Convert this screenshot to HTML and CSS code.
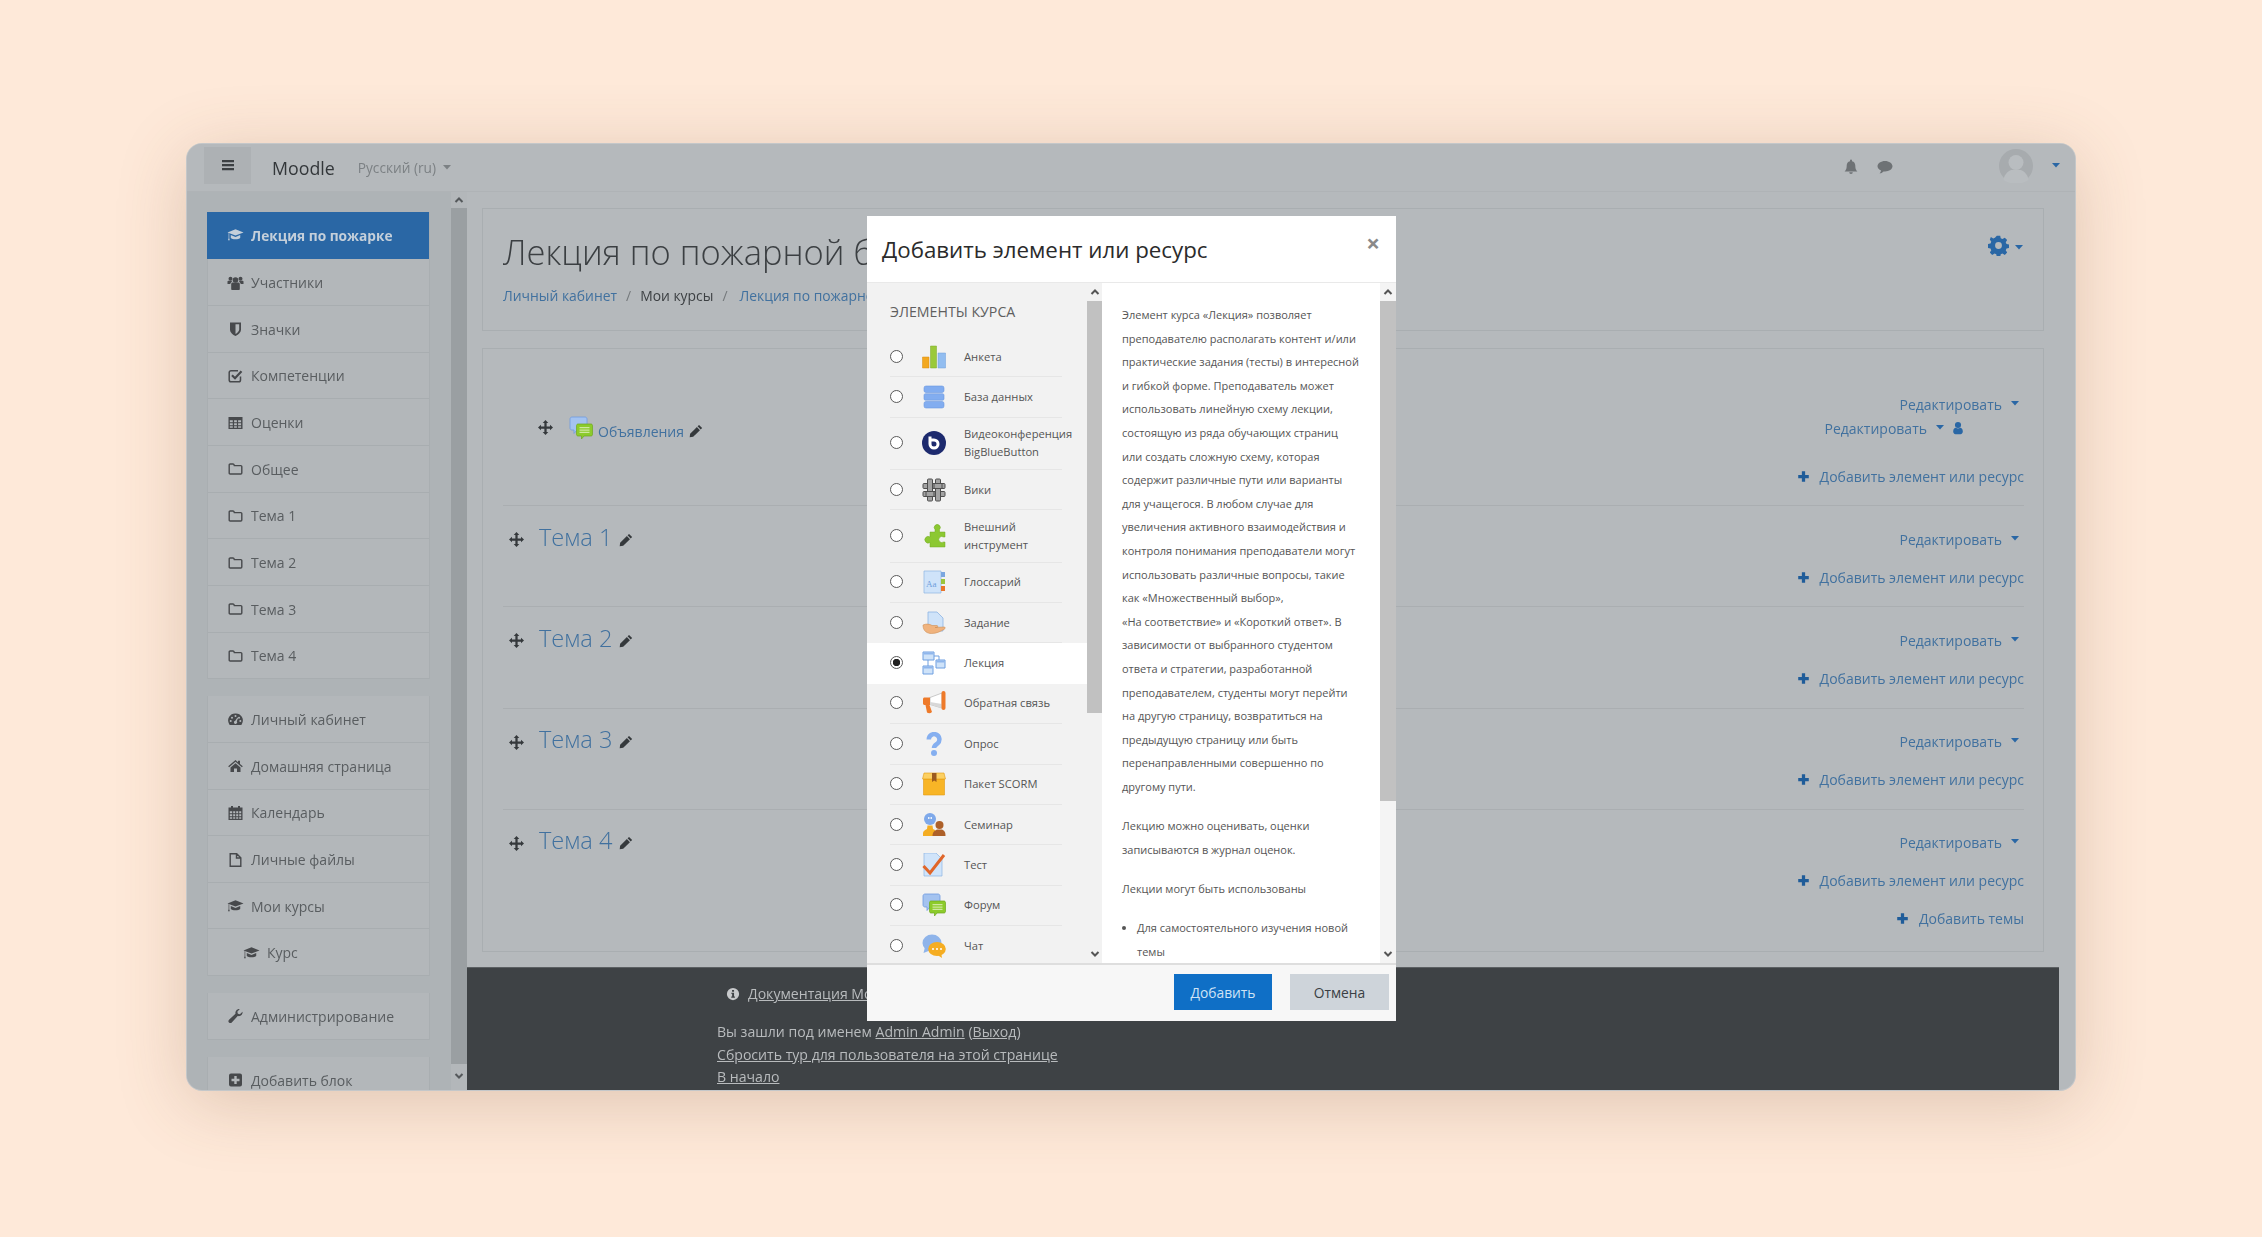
FILE: index.html
```html
<!DOCTYPE html>
<html lang="ru">
<head>
<meta charset="utf-8">
<title>Moodle</title>
<link rel="stylesheet" href="styles.css">
</head>
<body>
<svg class="defs" aria-hidden="true">
  <symbol id="i-bars" viewBox="0 0 16 16"><path d="M2 3h12v2.2H2zM2 7h12v2.2H2zM2 11h12v2.2H2z"/></symbol>
  <symbol id="i-cap" viewBox="0 0 18 16"><path d="M9 2 .5 5.3 9 8.6l8.500-3.300z"/><path d="M4 8v3.200c1.600 1.800 8.400 1.800 10 0V8L9 10z"/><path d="M1.700 6v5.500l-.7 2h2l-.6-2V6.500z"/></symbol>
  <symbol id="i-users" viewBox="0 0 16 16"><circle cx="8" cy="5" r="2.800"/><circle cx="3" cy="3.800" r="2"/><circle cx="13" cy="3.800" r="2"/><path d="M3.700 9c0-1 1-1.500 2-1.500h4.600c1 0 2 .5 2 1.500v5c0 .6-.5 1-1 1H4.700c-.5 0-1-.4-1-1z"/><path d="M0 6.500c0-.5.5-.8 1-.8h3l.5 1.300C3.500 7.300 3 8 2.800 9H0zM16 6.500c0-.5-.5-.8-1-.8h-3l-.5 1.300c1 .3 1.500 1 1.700 2H16z"/></symbol>
  <symbol id="i-shield" viewBox="0 0 16 16"><path fill-rule="evenodd" d="M2.500 1.500h11v7c0 3-3 5.500-5.500 6.500-2.500-1-5.500-3.500-5.500-6.500zM8 3.300v9.700c1.700-.9 3.700-2.700 3.700-4.500V3.300z"/></symbol>
  <symbol id="i-check" viewBox="0 0 16 16"><path fill="none" stroke="currentColor" stroke-width="1.500" d="M13 8.500V12a1.800 1.800 0 0 1-1.800 1.800H3.500A1.800 1.800 0 0 1 1.700 12V4.500a1.800 1.800 0 0 1 1.800-1.800h7"/><path fill="none" stroke="currentColor" stroke-width="2.200" d="m4.500 7.200 3 3 6.500-7"/></symbol>
  <symbol id="i-table" viewBox="0 0 16 16"><path fill-rule="evenodd" d="M1 2h14v12H1zM2.300 5.300v2h3v-2zm4.300 0v2h2.800v-2zm4 0v2h3v-2zM2.300 8.300v2h3v-2zm4.300 0v2h2.800v-2zm4 0v2h3v-2zm-8.300 3v1.500h3v-1.500zm4.300 0v1.500h2.800v-1.500zm4 0v1.500h3v-1.500z"/></symbol>
  <symbol id="i-folder" viewBox="0 0 16 16"><path fill="none" stroke="currentColor" stroke-width="1.400" d="M1.700 4c0-.6.400-1 1-1h2.800c.6 0 1 .4 1.100 1l.2.600h6.500c.6 0 1 .4 1 1V12c0 .6-.4 1-1 1H2.700c-.6 0-1-.4-1-1z"/></symbol>
  <symbol id="i-gauge" viewBox="0 0 16 16"><path fill-rule="evenodd" d="M8 1.500a7 7 0 0 1 6.400 10.500l-.6 1H2.200l-.6-1A7 7 0 0 1 8 1.500zM8 3a1 1 0 1 0 0 2 1 1 0 0 0 0-2zM4.500 4.700a1 1 0 1 0 0 2 1 1 0 0 0 0-2zm7 0a1 1 0 1 0 0 2 1 1 0 0 0 0-2zM3.200 8a1 1 0 1 0 0 2 1 1 0 0 0 0-2zm9.600 0a1 1 0 1 0 0 2 1 1 0 0 0 0-2zM9.900 5.600 7.800 8.700a1.600 1.600 0 1 0 1.500.6l1.300-3.400z"/></symbol>
  <symbol id="i-home" viewBox="0 0 16 16"><path d="M8 2 .7 8.300l.9 1L8 3.800l6.400 5.500.9-1L12.500 6V2.700h-2v1.600z"/><path d="M3 9.500 8 5.300l5 4.200V14H9.500v-3.500h-3V14H3z"/></symbol>
  <symbol id="i-cal" viewBox="0 0 16 16"><path fill-rule="evenodd" d="M3.500 1h2v1.500h5V1h2v1.500H15V15H1V2.500h2.500zM2.300 6.300v2h2.400v-2zm3.400 0v2h2v-2zm3 0v2h2v-2zm3 0v2h2v-2zm-9.400 3v2h2.400v-2zm3.400 0v2h2v-2zm3 0v2h2v-2zm3 0v2h2v-2zm-9.400 3v1.500h2.400v-1.500zm3.400 0v1.500h2v-1.500zm3 0v1.500h2v-1.500zm3 0v1.500h2v-1.500z"/></symbol>
  <symbol id="i-file" viewBox="0 0 16 16"><path fill="none" stroke="currentColor" stroke-width="1.400" d="M2.700 1.700h6.500l4.100 4.100v8.500H2.700zM9 1.700V6h4.300"/></symbol>
  <symbol id="i-wrench" viewBox="0 0 16 16"><path d="M15 3.800c.5 2.300-1.700 5-4.800 4.200L4.300 14.500c-.8.800-2.100.800-2.800 0-.8-.8-.8-2 0-2.800L8 5.800C7.300 2.800 10 .5 12.300 1L9.800 3.700l.6 2 2 .6z"/></symbol>
  <symbol id="i-plussq" viewBox="0 0 16 16"><path fill-rule="evenodd" d="M3.500 1.500h9a2 2 0 0 1 2 2v9a2 2 0 0 1-2 2h-9a2 2 0 0 1-2-2v-9a2 2 0 0 1 2-2zM6.800 4v2.800H4v2.400h2.800V12h2.400V9.200H12V6.800H9.200V4z"/></symbol>
  <symbol id="i-move" viewBox="0 0 16 16"><path d="M8 0 5 3.200h1.800v3.600H3.200V5L0 8l3.200 3V9.200h3.600v3.600H5L8 16l3-3.200H9.200V9.200h3.600V11L16 8l-3.200-3v1.800H9.200V3.200H11z"/></symbol>
  <symbol id="i-pencil" viewBox="0 0 16 16"><path d="M11.500 1 15 4.500 13.300 6.200 9.800 2.700zM9 3.500l3.500 3.500-7.700 7.700L.8 15.200l.5-4z"/></symbol>
  <symbol id="i-plus" viewBox="0 0 16 16"><path d="M6 1.500h4V6h4.500v4H10v4.500H6V10H1.500V6H6z"/></symbol>
  <symbol id="i-user" viewBox="0 0 16 16"><circle cx="8" cy="4.500" r="3.500"/><path d="M2.500 12c0-3 1.500-4.300 3-4.300 1.500 1 3.500 1 5 0 1.500 0 3 1.300 3 4.300 0 1.700-1 3-2.600 3H5.100c-1.600 0-2.600-1.300-2.600-3z"/></symbol>
  <symbol id="i-bell" viewBox="0 0 16 16"><path d="M8 .5a1 1 0 0 1 1 1v.7c2.200.5 3.300 2.300 3.300 4.500 0 3.700 1.200 4.700 2.200 5.800h-13c1-1.100 2.200-2.100 2.200-5.800 0-2.200 1.100-4 3.300-4.500v-.7a1 1 0 0 1 1-1zM6.200 13.200h3.600a1.800 1.800 0 0 1-3.600 0z"/></symbol>
  <symbol id="i-chat" viewBox="0 0 16 16"><path d="M8 2c4 0 7.500 2.300 7.500 5.300S12 12.500 8 12.500c-.6 0-1 0-1.500-.1C5.400 13.500 4 14.300 2.600 14.500c.8-.9 1.300-1.800 1.500-3C2 10.600.5 9.100.5 7.300.5 4.300 4 2 8 2z"/></symbol>
  <symbol id="i-cog" viewBox="0 0 16 16"><path fill-rule="evenodd" d="M6.700.5h2.600l.4 2 1.300.6 1.800-1.100 1.800 1.800-1.100 1.800.6 1.300 2 .4v2.600l-2 .4-.6 1.300 1.100 1.800-1.800 1.800-1.800-1.100-1.300.6-.4 2H6.700l-.4-2-1.300-.6-1.800 1.100-1.800-1.800 1.100-1.800-.6-1.300-2-.4V6.900l2-.4.6-1.300-1.100-1.800L2.200 1.600 4 2.700l1.300-.6zM8 5.400a2.600 2.600 0 1 0 0 5.200 2.600 2.600 0 0 0 0-5.200z"/></symbol>
  <symbol id="i-info" viewBox="0 0 16 16"><path fill-rule="evenodd" d="M8 1a7 7 0 1 1 0 14A7 7 0 0 1 8 1zM6.900 3.300v2.100h2.300V3.300zM6 6.500v1.300h1v3H6v1.500h4.200v-1.500h-1v-4.300z"/></symbol>
  <symbol id="i-up" viewBox="0 0 10 10"><path fill="none" stroke="currentColor" stroke-width="2" d="m1.500 7 3.500-3.500L8.500 7"/></symbol>
  <symbol id="i-down" viewBox="0 0 10 10"><path fill="none" stroke="currentColor" stroke-width="2" d="m1.500 3 3.500 3.500L8.500 3"/></symbol>
  <symbol id="i-caret" viewBox="0 0 10 6"><path d="M0 0h10L5 5.500z"/></symbol>
  <symbol id="m-forum" viewBox="0 0 24 24"><path fill="#a4c3f0" stroke="#6f9be0" stroke-width=".8" d="M3 1h13c1.100 0 2 .9 2 2v9c0 1.100-.9 2-2 2H8l-3 3.500V14H3c-1.100 0-2-.9-2-2V3c0-1.100.9-2 2-2z"/><path fill="#8ccb2b" stroke="#6fa81d" stroke-width=".7" d="M9 8h13c.8 0 1.500.7 1.500 1.500v9c0 .8-.7 1.500-1.500 1.500h-7l-2.500 3v-3H9c-.8 0-1.500-.7-1.500-1.500v-9C7.500 8.700 8.200 8 9 8z"/><path fill="#cfe8a0" d="M10.500 11h10v1.300h-10zM10.500 13.400h10v1.300h-10zM10.500 15.800h10v1.300h-10z"/></symbol>
</svg>

<div class="window">
  <header class="topbar">
    <button class="burger"><svg class="ic16"><use href="#i-bars"/></svg></button>
    <span class="brand">Moodle</span>
    <span class="lang">Русский (ru)<svg class="caret"><use href="#i-caret"/></svg></span>
    <div class="top-right">
      <svg class="ic-top bell"><use href="#i-bell"/></svg>
      <svg class="ic-top chat"><use href="#i-chat"/></svg>
      <svg class="avatar" viewBox="0 0 34 34"><circle cx="17" cy="17" r="17" fill="#a7abae"/><circle cx="17" cy="13.500" r="7.500" fill="#b9bdc0"/><path fill="#b9bdc0" d="M4.500 31c1-7 6-9.500 8-10h9c2 .5 7 3 8 10-3.500 2.500-7.500 3.500-12.500 3.500S8 33.500 4.500 31z"/></svg>
      <svg class="caret caret-user"><use href="#i-caret"/></svg>
    </div>
  </header>

  <div class="layout">
    <aside class="sidebar">
      <ul class="nav">
        <li class="nav-item active"><svg class="ni"><use href="#i-cap"/></svg>Лекция по пожарке</li>
        <li class="nav-item"><svg class="ni"><use href="#i-users"/></svg>Участники</li>
        <li class="nav-item"><svg class="ni"><use href="#i-shield"/></svg>Значки</li>
        <li class="nav-item"><svg class="ni"><use href="#i-check"/></svg>Компетенции</li>
        <li class="nav-item"><svg class="ni"><use href="#i-table"/></svg>Оценки</li>
        <li class="nav-item"><svg class="ni"><use href="#i-folder"/></svg>Общее</li>
        <li class="nav-item"><svg class="ni"><use href="#i-folder"/></svg>Тема 1</li>
        <li class="nav-item"><svg class="ni"><use href="#i-folder"/></svg>Тема 2</li>
        <li class="nav-item"><svg class="ni"><use href="#i-folder"/></svg>Тема 3</li>
        <li class="nav-item"><svg class="ni"><use href="#i-folder"/></svg>Тема 4</li>
      </ul>
      <ul class="nav">
        <li class="nav-item"><svg class="ni"><use href="#i-gauge"/></svg>Личный кабинет</li>
        <li class="nav-item"><svg class="ni"><use href="#i-home"/></svg>Домашняя страница</li>
        <li class="nav-item"><svg class="ni"><use href="#i-cal"/></svg>Календарь</li>
        <li class="nav-item"><svg class="ni"><use href="#i-file"/></svg>Личные файлы</li>
        <li class="nav-item"><svg class="ni"><use href="#i-cap"/></svg>Мои курсы</li>
        <li class="nav-item sub"><svg class="ni"><use href="#i-cap"/></svg>Курс</li>
      </ul>
      <ul class="nav">
        <li class="nav-item"><svg class="ni"><use href="#i-wrench"/></svg>Администрирование</li>
      </ul>
      <ul class="nav">
        <li class="nav-item"><svg class="ni"><use href="#i-plussq"/></svg>Добавить блок</li>
      </ul>
    </aside>
    <div class="side-scroll">
      <svg class="arrow"><use href="#i-up"/></svg>
      <div class="side-thumb"></div>
      <svg class="arrow"><use href="#i-down"/></svg>
    </div>

    <main class="main">
      <div class="content">
        <section class="head-card">
          <div class="head-top">
            <h1 class="page-title">Лекция по пожарной б</h1>
            <div class="gear"><svg class="gear-ic"><use href="#i-cog"/></svg><svg class="caret"><use href="#i-caret"/></svg></div>
          </div>
          <nav class="crumbs"><a class="link">Личный кабинет</a><span class="sep">/</span><span>Мои курсы</span><span class="sep sep-wide">/</span><a class="link">Лекция по пожарной безопасности</a></nav>
        </section>

        <section class="course">
          <div class="topic topic-first">
            <div class="topic-left first-left">
              <svg class="mv"><use href="#i-move"/></svg>
              <svg class="forum-ic"><use href="#m-forum"/></svg>
              <a class="link forum-link">Объявления</a>
              <svg class="pen"><use href="#i-pencil"/></svg>
            </div>
            <div class="topic-right">
              <div class="act"><a class="link">Редактировать</a><svg class="caret"><use href="#i-caret"/></svg></div>
              <div class="act act-user"><a class="link">Редактировать</a><svg class="caret"><use href="#i-caret"/></svg><svg class="usr"><use href="#i-user"/></svg></div>
              <div class="act add add-first"><svg class="pl"><use href="#i-plus"/></svg><a class="link">Добавить элемент или ресурс</a></div>
            </div>
          </div>

          <div class="topic">
            <div class="topic-left"><svg class="mv"><use href="#i-move"/></svg><a class="topic-name">Тема 1</a><svg class="pen"><use href="#i-pencil"/></svg></div>
            <div class="topic-right">
              <div class="act"><a class="link">Редактировать</a><svg class="caret"><use href="#i-caret"/></svg></div>
              <div class="act add"><svg class="pl"><use href="#i-plus"/></svg><a class="link">Добавить элемент или ресурс</a></div>
            </div>
          </div>
          <div class="topic">
            <div class="topic-left"><svg class="mv"><use href="#i-move"/></svg><a class="topic-name">Тема 2</a><svg class="pen"><use href="#i-pencil"/></svg></div>
            <div class="topic-right">
              <div class="act"><a class="link">Редактировать</a><svg class="caret"><use href="#i-caret"/></svg></div>
              <div class="act add"><svg class="pl"><use href="#i-plus"/></svg><a class="link">Добавить элемент или ресурс</a></div>
            </div>
          </div>
          <div class="topic">
            <div class="topic-left"><svg class="mv"><use href="#i-move"/></svg><a class="topic-name">Тема 3</a><svg class="pen"><use href="#i-pencil"/></svg></div>
            <div class="topic-right">
              <div class="act"><a class="link">Редактировать</a><svg class="caret"><use href="#i-caret"/></svg></div>
              <div class="act add"><svg class="pl"><use href="#i-plus"/></svg><a class="link">Добавить элемент или ресурс</a></div>
            </div>
          </div>
          <div class="topic topic-last">
            <div class="topic-left"><svg class="mv"><use href="#i-move"/></svg><a class="topic-name">Тема 4</a><svg class="pen"><use href="#i-pencil"/></svg></div>
            <div class="topic-right">
              <div class="act"><a class="link">Редактировать</a><svg class="caret"><use href="#i-caret"/></svg></div>
              <div class="act add"><svg class="pl"><use href="#i-plus"/></svg><a class="link">Добавить элемент или ресурс</a></div>
              <div class="act add"><svg class="pl"><use href="#i-plus"/></svg><a class="link">Добавить темы</a></div>
            </div>
          </div>
        </section>
      </div>

      <footer class="footer">
        <div class="foot-doc"><svg class="foot-info"><use href="#i-info"/></svg><a class="flink">Документация Moodle для этой страницы</a></div>
        <div>Вы зашли под именем <a class="flink">Admin Admin</a> (<a class="flink">Выход</a>)</div>
        <div><a class="flink">Сбросить тур для пользователя на этой странице</a></div>
        <div><a class="flink">В начало</a></div>
      </footer>
    </main>
  </div>

  <div class="modal">
    <div class="modal-head">
      <h2 class="modal-title">Добавить элемент или ресурс</h2>
      <span class="modal-x">×</span>
    </div>
    <div class="modal-body">
      <div class="picker">
        <div class="picker-title">ЭЛЕМЕНТЫ КУРСА</div>
        <ul class="mods">
          <li class="mod"><div class="mod-in"><input class="rad" type="radio" name="m">
            <svg class="mi" viewBox="0 0 24 24"><path fill="#f3a81f" stroke="#d98c12" stroke-width=".5" d="M.5 12h6.500v11H.5z"/><path fill="#9ac93a" stroke="#7aa82a" stroke-width=".5" d="M8.500 1h6v22h-6z"/><path fill="#92bdf0" stroke="#6f9edb" stroke-width=".5" d="M16 8h7.500v15H16z"/></svg>
            <span>Анкета</span></div></li>
          <li class="mod"><div class="mod-in"><input class="rad" type="radio" name="m">
            <svg class="mi" viewBox="0 0 24 24"><g fill="#82adf0" stroke="#6a97e0" stroke-width=".6"><rect x="2" y="1" width="20" height="6.500" rx="2"/><rect x="2" y="8.700" width="20" height="6.500" rx="1.500"/><rect x="2" y="16.500" width="20" height="6.500" rx="2"/></g></svg>
            <span>База данных</span></div></li>
          <li class="mod"><div class="mod-in"><input class="rad" type="radio" name="m">
            <svg class="mi" viewBox="0 0 24 24"><circle cx="12" cy="12" r="12" fill="#1d2a6e"/><path fill="none" stroke="#fff" stroke-width="3" d="M8 5.500V13a4 4 0 1 0 4-4H9.500"/></svg>
            <span>Видеоконференция<br>BigBlueButton</span></div></li>
          <li class="mod"><div class="mod-in"><input class="rad" type="radio" name="m">
            <svg class="mi" viewBox="0 0 24 24"><g fill="#a3a3a3" stroke="#4f4f4f" stroke-width="1"><rect x="1" y="5.500" width="22" height="5" rx="1"/><rect x="1" y="13.500" width="22" height="5" rx="1"/><rect x="5.500" y="1" width="5" height="22" rx="1"/><rect x="13.500" y="1" width="5" height="22" rx="1"/><path d="M12 5.500h8v5h-8zM4 13.500h8v5H4z"/></g></svg>
            <span>Вики</span></div></li>
          <li class="mod"><div class="mod-in"><input class="rad" type="radio" name="m">
            <svg class="mi" viewBox="0 0 24 24"><path fill="#8cc832" stroke="#73a825" stroke-width=".5" d="M8 8h5V5.500a3 3 0 1 1 4.500 0V8H23v5h-1.500a3 3 0 1 0 0 5H23v5H8v-4.500a3.300 3.300 0 1 1 0-5.500z"/></svg>
            <span>Внешний<br>инструмент</span></div></li>
          <li class="mod"><div class="mod-in"><input class="rad" type="radio" name="m">
            <svg class="mi" viewBox="0 0 24 24"><path fill="#cfe3f9" stroke="#8db4e3" stroke-width=".7" d="M2 1h17v22H2z"/><rect x="19" y="2" width="4" height="5" fill="#7ba7e0"/><rect x="19" y="9" width="4" height="5" fill="#9bc53d"/><rect x="19" y="16" width="4" height="5" fill="#e9752b"/><text x="4" y="17" class="aa">Aa</text></svg>
            <span>Глоссарий</span></div></li>
          <li class="mod"><div class="mod-in"><input class="rad" type="radio" name="m">
            <svg class="mi" viewBox="0 0 24 24"><path fill="#cfe3f9" stroke="#8db4e3" stroke-width=".8" d="M6 1h9l6 6v13H6z"/><path fill="#f0b37e" stroke="#cf9058" stroke-width=".6" d="M1 14c3-1.500 7-1 9 .5h5c1 0 1 2 0 2h-2l9-.5c1.500 0 1.500 1.500.5 2-4 2.500-8 4.500-13 4.500-4 0-8.500-2-8.500-8.500z"/></svg>
            <span>Задание</span></div></li>
          <li class="mod selected"><div class="mod-in"><input class="rad" type="radio" name="m" checked>
            <svg class="mi" viewBox="0 0 24 24"><g fill="#cfe3f9" stroke="#6f9fe0" stroke-width="1"><path d="M1 1h11v8H1zM1 15h10v8H1zM14 9h9v8h-9z"/></g><path fill="none" stroke="#6f9fe0" d="M6 9v6M12 5h5v4"/><path fill="#8fb6ec" d="M1.500 1.500h10v2h-10zM14.500 9.500h8v2h-8zM1.500 15.500h9v2h-9z"/></svg>
            <span>Лекция</span></div></li>
          <li class="mod"><div class="mod-in"><input class="rad" type="radio" name="m">
            <svg class="mi" viewBox="0 0 24 24"><path fill="#fff" stroke="#a9a9a9" stroke-width=".6" d="M8 6.500 20 2v15L8 13.500z"/><path fill="#d8d8d8" d="M8 11 20 13v4L8 13.500z"/><path fill="#ee7a2a" d="M1 8c0-.8.700-1.500 1.500-1.500H8V14H7.500l2.500 7c-1.500 1.500-3.500 1.500-5 .5L3.500 14C2 14 1 13.500 1 12.500z"/><rect x="19.500" y="0" width="4" height="19" rx="2" fill="#ee7a2a"/></svg>
            <span>Обратная связь</span></div></li>
          <li class="mod"><div class="mod-in"><input class="rad" type="radio" name="m">
            <svg class="mi" viewBox="0 0 24 24"><path fill="none" stroke="#85aff0" stroke-width="4.500" d="M6.800 7.500a5.300 5.300 0 1 1 8.700 4c-2 1.500-3.500 2.200-3.500 4.500"/><circle cx="12" cy="21" r="3" fill="#85aff0"/></svg>
            <span>Опрос</span></div></li>
          <li class="mod"><div class="mod-in"><input class="rad" type="radio" name="m">
            <svg class="mi" viewBox="0 0 24 24"><path fill="#f8b526" stroke="#e39a12" stroke-width=".6" d="M1.500 7h21v16h-21z"/><path fill="#fcd062" stroke="#e39a12" stroke-width=".6" d="M2 1h20l1.500 6H.5z"/><path fill="#9b5a1e" d="M10 1h4.500v9L12.200 8.500 10 10z"/></svg>
            <span>Пакет SCORM</span></div></li>
          <li class="mod"><div class="mod-in"><input class="rad" type="radio" name="m">
            <svg class="mi" viewBox="0 0 24 24"><circle cx="8" cy="6" r="6" fill="#7fa9ea"/><path fill="#e9f1fb" d="M6 4h1.500v2H6zM8.500 4H10v2H8.500z"/><path fill="#f4ad22" d="M1 23v-3c0-2 2-3 4-4l.5-3.500h5L11 16c1.500.5 2 1 2.500 2v5z"/><circle cx="17.500" cy="12" r="4" fill="#ad6029"/><path fill="#ad6029" d="M10.500 23c0-4 2-5.500 4.500-6.500h5c2.500 1 3.500 2.500 3.500 6.500z"/></svg>
            <span>Семинар</span></div></li>
          <li class="mod"><div class="mod-in"><input class="rad" type="radio" name="m">
            <svg class="mi" viewBox="0 0 24 24"><path fill="#d0e4fa" stroke="#8db4e3" stroke-width=".7" d="M2 0h12l6 6v17H2z"/><path fill="none" stroke="#e0662a" stroke-width="3" d="m1.500 13 6.500 7L22 2"/></svg>
            <span>Тест</span></div></li>
          <li class="mod"><div class="mod-in"><input class="rad" type="radio" name="m">
            <svg class="mi"><use href="#m-forum"/></svg>
            <span>Форум</span></div></li>
          <li class="mod"><div class="mod-in"><input class="rad" type="radio" name="m">
            <svg class="mi" viewBox="0 0 24 24"><ellipse cx="10" cy="9" rx="9.500" ry="8.500" fill="#8fb4ea"/><path fill="#8fb4ea" d="m3 13-1.500 6L9 16z"/><ellipse cx="15" cy="15" rx="8.800" ry="7" fill="#f5ad22"/><path fill="#f5ad22" d="m14 20 6 4-1-6z"/><g fill="#fff"><circle cx="11" cy="15" r="1"/><circle cx="15" cy="15" r="1"/><circle cx="19" cy="15" r="1"/></g></svg>
            <span>Чат</span></div></li>
        </ul>
      </div>
      <div class="mscroll">
        <svg class="arrow"><use href="#i-up"/></svg>
        <div class="mtrack"><div class="mthumb thumb-left"></div></div>
        <svg class="arrow"><use href="#i-down"/></svg>
      </div>
      <div class="info">
        <p>Элемент курса «Лекция» позволяет<br>преподавателю располагать контент и/или<br>практические задания (тесты) в интересной<br>и гибкой форме. Преподаватель может<br>использовать линейную схему лекции,<br>состоящую из ряда обучающих страниц<br>или создать сложную схему, которая<br>содержит различные пути или варианты<br>для учащегося. В любом случае для<br>увеличения активного взаимодействия и<br>контроля понимания преподаватели могут<br>использовать различные вопросы, такие<br>как «Множественный выбор»,<br>«На соответствие» и «Короткий ответ». В<br>зависимости от выбранного студентом<br>ответа и стратегии, разработанной<br>преподавателем, студенты могут перейти<br>на другую страницу, возвратиться на<br>предыдущую страницу или быть<br>перенаправленными совершенно по<br>другому пути.</p>
        <p>Лекцию можно оценивать, оценки<br>записываются в журнал оценок.</p>
        <p>Лекции могут быть использованы</p>
        <ul class="info-list"><li>Для самостоятельного изучения новой<br>темы</li></ul>
      </div>
      <div class="mscroll">
        <svg class="arrow"><use href="#i-up"/></svg>
        <div class="mtrack"><div class="mthumb thumb-right"></div></div>
        <svg class="arrow"><use href="#i-down"/></svg>
      </div>
    </div>
    <div class="modal-foot">
      <button class="btn btn-primary">Добавить</button>
      <button class="btn btn-cancel">Отмена</button>
    </div>
  </div>
</div>
</body>
</html>
```

FILE: styles.css
```css
* { box-sizing: border-box; }
html, body { margin: 0; height: 100%; }
body {
  height: 1237px;
  overflow: hidden;
  background: #fee9d9;
  font-family: "Open Sans", "Noto Sans", sans-serif;
  font-size: 14px;
  color: #4f5356;
  padding: 144px 187px 147px 187px;
}
ul { list-style: none; margin: 0; padding: 0; }
h1, h2, p { margin: 0; }
svg { fill: currentColor; flex: none; }
.defs { position: absolute; width: 0; height: 0; }

.window {
  position: relative;
  width: 1888px;
  height: 946px;
  border-radius: 15px;
  overflow: hidden;
  background: #b5b9bc;
  box-shadow: 0 0 0 1px #c4c7c9;
  filter: blur(.35px);
}
body::before {
  content: "";
  position: absolute;
  left: 187px;
  top: 144px;
  width: 1888px;
  height: 946px;
  border-radius: 15px;
  box-shadow: 0 12px 70px rgba(120, 80, 50, .24);
}

/* top bar */
.topbar {
  height: 48px;
  display: flex;
  align-items: center;
  background: #b5b9bc;
  border-bottom: 1px solid #afb3b6;
  padding-left: 17px;
}
.burger {
  width: 47px;
  height: 37px;
  margin-top: -5px;
  border: 0;
  padding: 0;
  background: #adb1b4;
  color: #3c4043;
  display: flex;
  align-items: center;
  justify-content: center;
}
.ic16 { width: 16px; height: 16px; }
.brand { font-size: 17.8px; color: #33373a; margin-left: 21px; }
.lang { font-size: 13.7px; color: #7c8184; margin-left: 23px; display: flex; align-items: center; }
.caret { width: 8px; height: 5px; margin-left: 7px; }
.lang .caret { margin-left: 7px; }
.top-right { margin-left: auto; display: flex; align-items: center; color: #6e7275; }
.ic-top { width: 16px; height: 16px; margin-top: -1px; }
.chat { margin-left: 18px; }
.avatar { width: 34px; height: 34px; margin-left: 106px; margin-top: -4px; }
.caret-user { margin: -5px 15px 0 19px; color: #2a67a5; }

/* layout */
.layout { display: flex; height: 898px; }
.sidebar {
  width: 264px;
  padding: 20px 21px 0 20px;
  background: #aeb3b6;
  overflow: hidden;
}
.nav { margin-bottom: 17px; border: 1px solid #a9aeb1; border-width: 0 1px; }
.nav-item {
  height: 46.67px;
  display: flex;
  align-items: center;
  padding: 1px 0 0 19px;
  background: #b3b7ba;
  border-bottom: 1px solid #a8adb0;
  font-size: 14px;
  color: #595d60;
  white-space: nowrap;
}
.nav-item.active {
  height: 47.3px;
  padding: 0 0 0 20px;
  margin-left: -1px;
  background: #2a67a5;
  border-color: #2a67a5;
  color: #c4cfda;
  font-weight: 700;
  font-size: 13.7px;
}
.nav-item.sub { padding-left: 35px; }
.ni { width: 17px; height: 16px; margin-right: 7px; color: #47494c; }
.active .ni { color: #c4cfda; }

.side-scroll {
  width: 16px;
  background: #b3b7ba;
  display: flex;
  flex-direction: column;
  align-items: center;
  color: #55595c;
}
.arrow { width: 10px; height: 10px; margin: 3px 0; flex: none; }
.side-thumb { width: 100%; height: 856px; margin-bottom: 3px; background: #9a9fa2; }
.side-scroll .arrow:last-child { margin-top: 4px; }

/* main */
.main { width: 1592px; display: flex; flex-direction: column; }
.content { padding: 16px 15px 15px; height: 775px; display: flex; flex-direction: column; gap: 17px; }
.head-card { height: 123px; border: 1px solid #a9aeb1; padding: 19px 19px 0 20px; }
.head-top { display: flex; justify-content: space-between; }
.page-title {
  width: 364px;
  height: 48px;
  overflow: hidden;
  font-size: 34.5px;
  font-weight: 300;
  line-height: 48px;
  color: #3b3f42;
  white-space: nowrap;
}
.gear { display: flex; align-items: center; color: #2a67a5; height: 34px; margin-right: 1px; }
.gear-ic { width: 21px; height: 21px; }
.gear .caret { margin-left: 6px; margin-top: 5px; }
.crumbs { display: flex; margin-top: 10px; line-height: 20px; color: #3d4144; white-space: nowrap; font-size: 13.9px; }
.sep { margin: 0 9px; color: #74787b; }
.sep-wide { margin-right: 12px; }
.link { color: #41719f; }

.course { height: 604px; border: 1px solid #a9aeb1; padding: 0 19px 0 20px; }
.topic {
  height: 101.3px;
  display: flex;
  justify-content: space-between;
  border-bottom: 1px solid #aaaeb1;
}
.topic-first { height: 157px; }
.topic-last { border-bottom: 0; height: 144px; }
.topic-left { display: flex; align-items: center; align-self: flex-start; padding-top: 13px; height: 49px; }
.first-left { padding-top: 70px; height: 94px; }
.mv { width: 15px; height: 15px; margin-left: 6px; color: #35393c; }
.topic-left .mv { margin-top: 5px; }
.first-left .mv { margin: -8px 0 0 35px; }
.forum-ic { width: 24px; height: 24px; margin: -6px 0 0 16px; }
.forum-link { margin-left: 5px; font-size: 14px; }
.pen { width: 14px; height: 14px; margin: 5px 0 0 7px; color: #35393c; }
.first-left .pen { margin-top: 0; margin-left: 5px; }
.topic-name { font-size: 23.600px; font-weight: 300; color: #41719f; margin-left: 15px; line-height: 36px; margin-top: -1px; }
.topic-right { display: flex; flex-direction: column; align-items: flex-end; padding-top: 21px; gap: 14px; }
.topic-first .topic-right { padding-top: 43px; gap: 0; }
.act { height: 24px; display: flex; align-items: center; color: #2a67a5; }
.act .caret { margin: -2px 5px 0 9px; color: #2a67a5; }
.act-user { margin-right: 59px; }
.usr { width: 14px; height: 14px; margin-left: 7px; }
.act-user .caret { margin-right: 0; }
.add-first { margin-top: 24px; }
.pl { width: 13px; height: 13px; margin-right: 10px; color: #1f5c99; }

.footer {
  height: 123px;
  background: #3e4245;
  border-top: 1px solid #5c6063;
  padding: 15px 0 0 250px;
  color: #b8bbbd;
  line-height: 22.5px;
  font-size: 14.1px;
}
.foot-doc { display: flex; align-items: center; margin-bottom: 15.500px; margin-left: 9px; }
.foot-info { width: 14px; height: 14px; margin-right: 8px; color: #c8cacc; }
.flink { color: #b8bbbd; text-decoration: underline; }

/* modal */
.modal {
  position: absolute;
  left: 680px;
  top: 72px;
  width: 529px;
  height: 805px;
  background: #fff;
  display: flex;
  flex-direction: column;
}
.modal-head {
  height: 67px;
  flex: none;
  display: flex;
  align-items: center;
  justify-content: space-between;
  padding: 0 16px 0 15px;
  border-bottom: 1px solid #e9e9e9;
}
.modal-title { font-size: 22.3px; font-weight: 400; color: #2b2b2b; }
.modal-x { font-size: 24px; font-weight: 700; color: #8a8a8a; margin-top: -13px; line-height: 24px; }
.modal-body { height: 680px; flex: none; display: flex; overflow: hidden; }
.picker { width: 220px; background: #f2f2f2; flex: none; overflow: hidden; }
.picker-title { padding: 19px 0 15px 23px; line-height: 20px; font-size: 14.2px; color: #5f5f5f; }
.mod { padding: 0 25px 0 23px; }
.mod.selected { background: #fff; }
.mod-in {
  min-height: 40.4px;
  padding: 7.6px 0;
  display: flex;
  align-items: center;
  border-bottom: 1px solid #e6e6e6;
  line-height: 18px;
  font-size: 11.2px;
  color: #555;
  white-space: nowrap;
}
.selected .mod-in { border-bottom-color: transparent; }
.rad {
  appearance: none;
  width: 13px;
  height: 13px;
  margin: -1px 19px 0 0;
  flex: none;
  border: 1.3px solid #5a5a5a;
  border-radius: 50%;
  background: #fff;
}
.rad:checked { background: radial-gradient(circle, #222 0 3.4px, #fff 4px); }
.mi { width: 24px; height: 24px; margin-right: 18px; }
.aa { font: 9px "Liberation Serif", serif; fill: #6f9edb; }

.mscroll { width: 15px; flex: none; background: #f2f2f2; display: flex; flex-direction: column; align-items: center; color: #555; }
.mscroll:last-child { width: 16px; background: #f4f4f4; }
.mscroll .arrow { margin: 4px 0; }
.mtrack { flex: 1; width: 100%; }
.mthumb { background: #c1c1c1; width: 100%; }
.thumb-left { height: 412px; }
.thumb-right { height: 500px; }

.info { width: 278px; flex: none; padding: 20px 0 0 20px; overflow: hidden; font-size: 11px; line-height: 23.6px; color: #555; white-space: nowrap; }
.info p { margin-bottom: 15.6px; }
.info-list { list-style: disc; padding-left: 15px; }

.modal-foot {
  flex: 1;
  display: flex;
  justify-content: flex-end;
  gap: 18px;
  padding: 9px 7px 0 0;
  background: #f7f7f7;
  border-top: 2px solid #dedede;
}
.btn { width: 98px; height: 36px; border: 0; padding: 0; font: 13.8px "Open Sans", sans-serif; }
.btn-primary { background: #0f6fc6; color: #cfe3f5; }
.btn-cancel { background: #ced4da; color: #3a3f44; width: 99px; }
```
